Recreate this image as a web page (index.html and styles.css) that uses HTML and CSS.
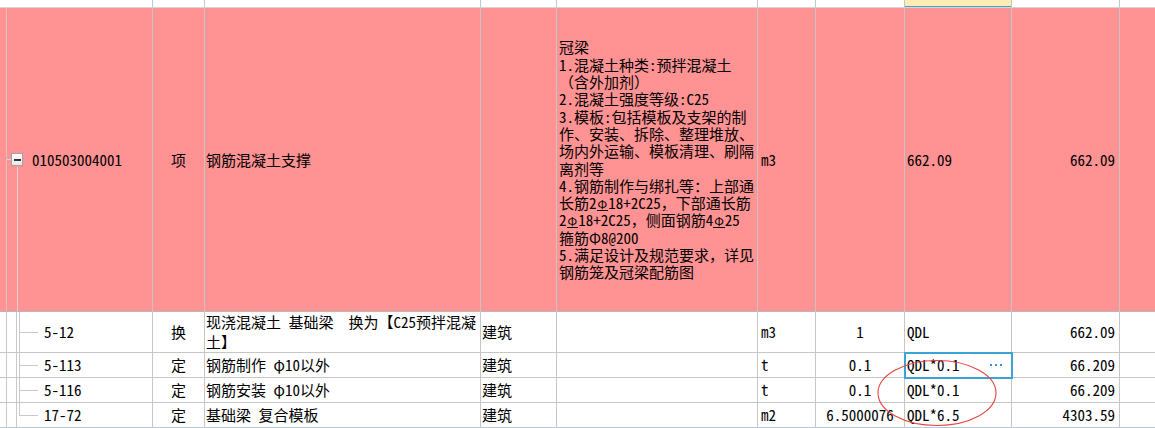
FILE: index.html
```html
<!DOCTYPE html>
<html lang="zh-CN">
<head>
<meta charset="utf-8">
<title>清单定额</title>
<link rel="stylesheet" href="styles.css">
</head>
<body>
<div class="sheet">
  <div class="row head">
    <div class="cell tree-head"></div>
    <div class="cell"></div>
    <div class="cell"></div>
    <div class="cell"></div>
    <div class="cell"></div>
    <div class="cell"></div>
    <div class="cell"></div>
    <div class="cell active-head"></div>
    <div class="cell"></div>
    <div class="cell last"></div>
  </div>

  <div class="row main">
    <div class="cell tree tree-parent"><span class="toggle"><span class="minus"></span></span><span class="code">010503004001</span></div>
    <div class="cell center">项</div>
    <div class="cell left">钢筋混凝土支撑</div>
    <div class="cell left"></div>
    <div class="cell desc"><div class="desc-text">冠梁<br>1.混凝土种类:预拌混凝土<br>（含外加剂）<br>2.混凝土强度等级:C25<br>3.模板:包括模板及支架的制<br>作、安装、拆除、整理堆放、<br>场内外运输、模板清理、刷隔<br>离剂等<br>4.钢筋制作与绑扎等：上部通<br>长筋2<span class="hrb">Φ</span>18+2C25，下部通长筋<br>2<span class="hrb">Φ</span>18+2C25，侧面钢筋4<span class="hrb">Φ</span>25<br>箍筋Φ8@200<br>5.满足设计及规范要求，详见<br>钢筋笼及冠梁配筋图</div></div>
    <div class="cell unit">m3</div>
    <div class="cell center"></div>
    <div class="cell expr">662.09</div>
    <div class="cell num">662.09</div>
    <div class="cell last"></div>
  </div>

  <div class="row sub tall">
    <div class="cell tree tree-child"><span class="code">5-12</span></div>
    <div class="cell center">换</div>
    <div class="cell name2"><div>现浇混凝土 基础梁&nbsp;&nbsp;换为【C25预拌混凝<br>土】</div></div>
    <div class="cell left">建筑</div>
    <div class="cell"></div>
    <div class="cell unit">m3</div>
    <div class="cell center">1</div>
    <div class="cell expr">QDL</div>
    <div class="cell num">662.09</div>
    <div class="cell last"></div>
  </div>

  <div class="row sub">
    <div class="cell tree tree-child"><span class="code">5-113</span></div>
    <div class="cell center">定</div>
    <div class="cell left">钢筋制作 φ10以外</div>
    <div class="cell left">建筑</div>
    <div class="cell"></div>
    <div class="cell unit">t</div>
    <div class="cell center">0.1</div>
    <div class="cell expr selected"><span>QDL*0.1</span><span class="more"><i></i><i></i><i></i></span></div>
    <div class="cell num">66.209</div>
    <div class="cell last"></div>
  </div>

  <div class="row sub">
    <div class="cell tree tree-child"><span class="code">5-116</span></div>
    <div class="cell center">定</div>
    <div class="cell left">钢筋安装 φ10以外</div>
    <div class="cell left">建筑</div>
    <div class="cell"></div>
    <div class="cell unit">t</div>
    <div class="cell center">0.1</div>
    <div class="cell expr">QDL*0.1</div>
    <div class="cell num">66.209</div>
    <div class="cell last"></div>
  </div>

  <div class="row sub final">
    <div class="cell tree tree-child tree-last"><span class="code">17-72</span></div>
    <div class="cell center">定</div>
    <div class="cell left">基础梁 复合模板</div>
    <div class="cell left">建筑</div>
    <div class="cell"></div>
    <div class="cell unit">m2</div>
    <div class="cell center">6.5000076</div>
    <div class="cell expr">QDL*6.5</div>
    <div class="cell num">4303.59</div>
    <div class="cell last"></div>
  </div>

  <svg class="mark" width="124" height="72" viewBox="0 0 124 72" aria-hidden="true">
    <ellipse cx="62" cy="34" rx="59" ry="32.5" fill="none" stroke="#e5443f" stroke-width="1.1"/>
  </svg>
</div>
</body>
</html>
```

FILE: styles.css
```css
html, body {
  margin: 0;
  padding: 0;
  background: #ffffff;
}

body {
  font-family: "Noto Sans Mono CJK SC", "Noto Sans CJK SC", sans-serif;
  font-size: 15px;
  color: #000;
  overflow: hidden;
}

.sheet {
  position: relative;
  width: 1155px;
  height: 428px;
}

.row {
  display: grid;
  grid-template-columns: 153px 52px 276px 76px 201px 58px 89px 107px 108px 1fr;
}

.cell {
  box-sizing: border-box;
  border-right: 1px solid #c6c6c6;
  border-bottom: 1px solid #c6c6c6;
  display: flex;
  align-items: center;
  white-space: nowrap;
  line-height: 18px;
  min-width: 0;
}

.cell.last {
  border-right: none;
}

/* header strip */
.head {
  height: 8px;
}
.head .cell {
  border-bottom-color: #d4d4d4;
}
.active-head {
  background: #fdecb4;
  box-shadow: inset 0 -1px 0 #45a5cc;
}

/* main (pink) row */
.main {
  height: 304px;
  background: #ff9292;
}
.main .cell {
  border-bottom-color: #c0b4b4;
}

.sub {
  height: 25px;
}
.sub.tall {
  height: 41px;
}
.sub.final .cell {
  border-bottom-color: #b4c8d6;
}

.center {
  justify-content: center;
}
.left {
  padding-left: 1px;
}
.unit {
  padding-left: 3px;
}
.expr {
  padding-left: 2px;
}
.num {
  justify-content: flex-end;
  padding-right: 4px;
}

.desc {
  padding-left: 2px;
}
.desc-text {
  line-height: 17.3px;
}

.name2 {
  padding-left: 1px;
  line-height: 20px;
  align-items: flex-start;
}

.hrb {
  display: inline-block;
  font-size: 12px;
  line-height: 12px;
  border-bottom: 1px solid #000;
  padding: 0 1px;
}

/* tree column */
.tree {
  --ln: #c9c9c9;
}
.tree-parent {
  background:
    linear-gradient(#d6c2c2, #d6c2c2) 6px 0 / 1px 100% no-repeat,
    linear-gradient(#e6d0d0, #e6d0d0) 6px 50% / 5px 1px no-repeat,
    linear-gradient(#e6d0d0, #e6d0d0) 17px 100% / 1px calc(50% - 7px) no-repeat;
}
.toggle {
  box-sizing: border-box;
  width: 12px;
  height: 13px;
  margin-left: 11px;
  border: 1px solid #a2a2a2;
  background: linear-gradient(#ffffff, #e8e8e8);
  display: flex;
  align-items: center;
  justify-content: center;
}
.minus {
  width: 7px;
  height: 2px;
  background: #333;
}
.tree-parent .code {
  margin-left: 9px;
}

.tree-child {
  padding-left: 44px;
  background:
    linear-gradient(var(--ln), var(--ln)) 6px 0 / 1px 100% no-repeat,
    linear-gradient(var(--ln), var(--ln)) 16px 0 / 1px 100% no-repeat,
    linear-gradient(var(--ln), var(--ln)) 19px 0 / 1px 100% no-repeat,
    linear-gradient(var(--ln), var(--ln)) 19px 50% / 19px 1px no-repeat;
}
.tree-child.tree-last {
  background:
    linear-gradient(var(--ln), var(--ln)) 6px 0 / 1px 100% no-repeat,
    linear-gradient(var(--ln), var(--ln)) 16px 0 / 1px 100% no-repeat,
    linear-gradient(var(--ln), var(--ln)) 19px 0 / 1px 50% no-repeat,
    linear-gradient(var(--ln), var(--ln)) 19px 50% / 19px 1px no-repeat;
}

/* selected expression cell */
.selected {
  position: relative;
  z-index: 2;
  outline: 2px solid #3ba3d6;
  outline-offset: -1px;
  justify-content: space-between;
  padding-right: 9px;
}
.more {
  display: flex;
  gap: 3px;
  align-items: center;
}
.more i {
  display: block;
  width: 2px;
  height: 2px;
  background: #3b8fd6;
}

/* hand-drawn annotation */
.mark {
  position: absolute;
  left: 875px;
  top: 359px;
  z-index: 3;
  pointer-events: none;
}
```
